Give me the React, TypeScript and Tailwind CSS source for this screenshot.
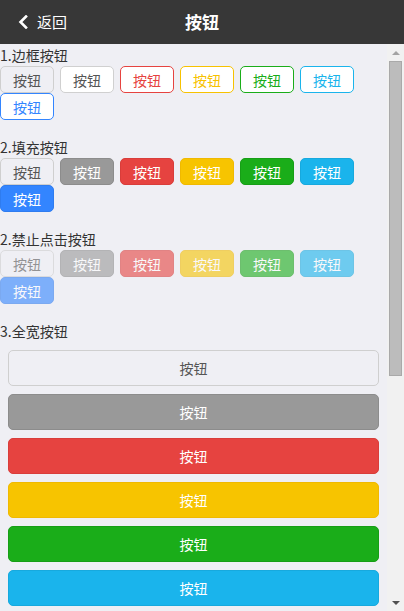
import React from 'react'

type Tone = 'default' | 'white' | 'red' | 'yellow' | 'green' | 'cyan' | 'blue'

const tones: Tone[] = ['default', 'white', 'red', 'yellow', 'green', 'cyan', 'blue']

const outlineCls: Record<Tone, string> = {
  default: 'bg-[#efeff4] border-[#cfcfcf] text-[#555]',
  white: 'bg-white border-[#d0d0d0] text-[#555]',
  red: 'bg-white border-[#e64340] text-[#e64340]',
  yellow: 'bg-white border-[#f7c200] text-[#f7c200]',
  green: 'bg-white border-[#1aad19] text-[#1aad19]',
  cyan: 'bg-white border-[#1ab4ec] text-[#1ab4ec]',
  blue: 'bg-white border-[#3385ff] text-[#3385ff]',
}

const fillCls: Record<Tone, string> = {
  default: 'bg-[#efeff4] border-[#cfcfcf] text-[#555]',
  white: 'bg-[#999] border-[#8c8c8c] text-white',
  red: 'bg-[#e64340] border-[#d93d3a] text-white',
  yellow: 'bg-[#f7c400] border-[#f0b900] text-white',
  green: 'bg-[#1aad19] border-[#179e16] text-white',
  cyan: 'bg-[#1ab4ec] border-[#17a9de] text-white',
  blue: 'bg-[#3385ff] border-[#2f7cef] text-white',
}

function SmallButton({ cls, disabled }: { cls: string; disabled?: boolean }) {
  return (
    <button
      className={`h-[27px] w-[54px] rounded-[5px] border text-[14px] leading-none ${cls} ${disabled ? 'opacity-60' : ''}`}
    >
      按钮
    </button>
  )
}

function BlockButton({ cls, disabled }: { cls: string; disabled?: boolean }) {
  return (
    <button
      className={`h-[36px] w-full rounded-[5px] border text-[14px] leading-none ${cls} ${disabled ? 'opacity-60' : ''}`}
    >
      按钮
    </button>
  )
}

function Title({ children }: { children: React.ReactNode }) {
  return <div className="h-[22px] text-[14px] leading-[22px] text-[#333]">{children}</div>
}

// classic scrollbar look (the real one is hidden in the screenshot browser)
function ScrollBar() {
  return (
    <div className="flex w-[17px] shrink-0 flex-col bg-[#f1f1f1]">
      <div className="flex h-[17px] items-center justify-center">
        <svg width="8" height="4" viewBox="0 0 8 4">
          <path d="M0 4 L4 0 L8 4 Z" fill="#a3a3a3" />
        </svg>
      </div>
      <div className="flex-1">
        <div className="mx-[2px] h-[315px] border border-[#a9a9a9] bg-[#bcbcbc]" />
      </div>
      <div className="flex h-[17px] items-center justify-center">
        <svg width="8" height="4" viewBox="0 0 8 4">
          <path d="M0 0 L8 0 L4 4 Z" fill="#505050" />
        </svg>
      </div>
    </div>
  )
}

export default function App() {
  return (
    <div
      className="flex h-[611px] w-[404px] flex-col bg-[#efeff4]"
      style={{ fontFamily: '"Noto Sans CJK SC", "Noto Sans", sans-serif' }}
    >
      {/* Header */}
      <div className="relative flex h-[44px] shrink-0 items-center bg-[#373737] text-white">
        <div className="flex items-center pl-[18px]">
          <svg width="10" height="14" viewBox="0 0 10 14" className="mr-[9px]">
            <path d="M8 1.5 L2.5 7 L8 12.5" fill="none" stroke="white" strokeWidth="2.6" strokeLinecap="square" />
          </svg>
          <span className="text-[15px]">返回</span>
        </div>
        <div className="absolute inset-0 flex items-center justify-center text-[17px] font-bold">按钮</div>
      </div>

      <div className="flex min-h-0 flex-1">
        {/* Content */}
        <div className="min-w-0 flex-1 overflow-hidden">
          <div className="pb-[8px]">
            <Title>1.边框按钮</Title>
            <div className="flex flex-wrap gap-x-[6px]">
              {tones.map(t => (
                <SmallButton key={t} cls={outlineCls[t]} />
              ))}
            </div>

            <div className="mt-[16px]">
              <Title>2.填充按钮</Title>
              <div className="flex flex-wrap gap-x-[6px]">
                {tones.map(t => (
                  <SmallButton key={t} cls={fillCls[t]} />
                ))}
              </div>
            </div>

            <div className="mt-[16px]">
              <Title>2.禁止点击按钮</Title>
              <div className="flex flex-wrap gap-x-[6px]">
                {tones.map(t => (
                  <SmallButton key={t} cls={fillCls[t]} disabled />
                ))}
              </div>
            </div>

            <div className="mt-[16px]">
              <Title>3.全宽按钮</Title>
              <div className="flex flex-col gap-[8px] p-[8px]">
                {tones.map(t => (
                  <BlockButton key={t} cls={fillCls[t]} />
                ))}
              </div>
            </div>

            <div className="mt-[8px]">
              <Title>4.全宽禁止点击按钮</Title>
              <div className="flex flex-col gap-[8px] p-[8px]">
                {tones.map(t => (
                  <BlockButton key={t} cls={fillCls[t]} disabled />
                ))}
              </div>
            </div>
          </div>
        </div>

        <ScrollBar />
      </div>
    </div>
  )
}
